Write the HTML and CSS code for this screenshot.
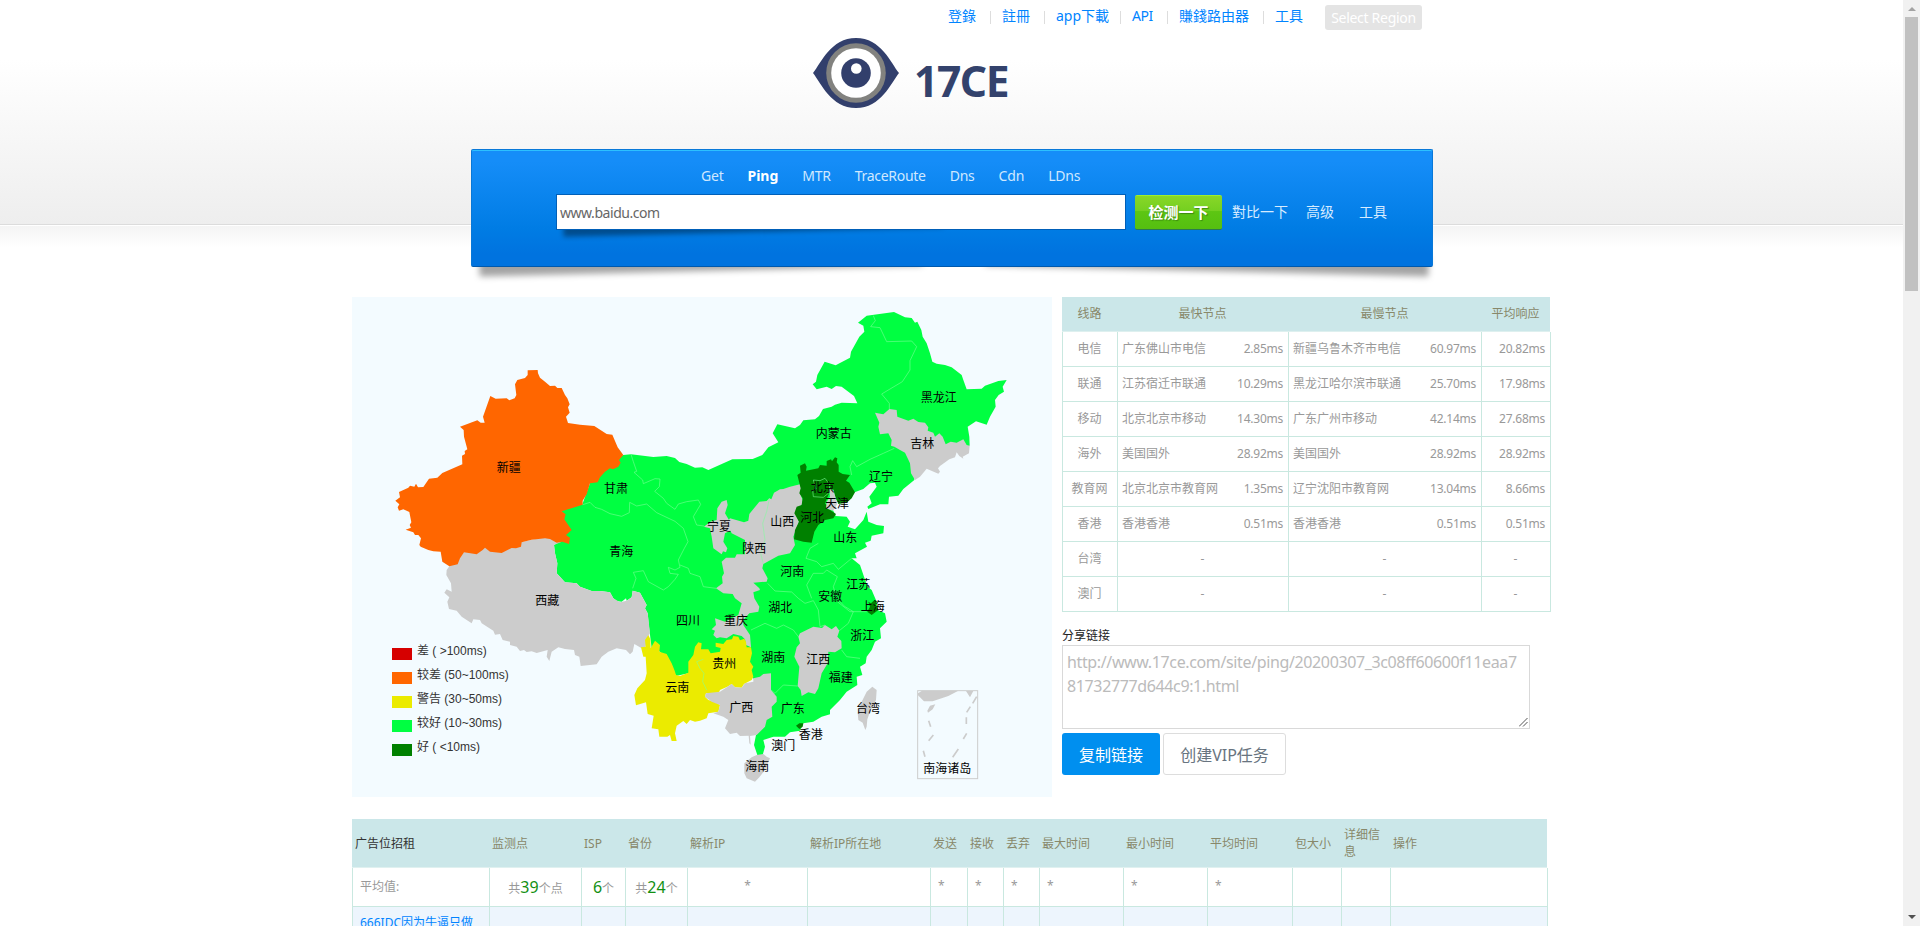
FILE: index.html
```html
<!DOCTYPE html>
<html lang="zh">
<head>
<meta charset="utf-8">
<title>17CE</title>
<link rel="stylesheet" href="styles.css">
</head>
<body>
<main class="page">
  <nav class="topnav">
    <a class="w54">登錄</a><a class="w54">註冊</a><a class="w76">app下載</a><a class="w47">API</a><a class="w96">賺錢路由器</a><a class="last">工具</a>
    <button class="region">Select Region</button>
  </nav>
  <div class="logo">
    <svg width="86" height="70" viewBox="0 0 86 70">
      <path d="M0 35C8 25 18 0 43 0S78 25 86 35C78 45 68 70 43 70S8 45 0 35Z" fill="#323f6c"/>
      <circle cx="43" cy="35" r="29.8" fill="#82827f"/><circle cx="43" cy="35" r="24.8" fill="#fff"/>
      <circle cx="43" cy="35" r="14.8" fill="#323f6c"/><circle cx="43.3" cy="30.5" r="5.3" fill="#fff"/>
    </svg>
    <span>17CE</span>
  </div>
  <section class="panel">
    <div class="panel-face">
      <div class="tabs"><a>Get</a><a class="on">Ping</a><a>MTR</a><a class="trace">TraceRoute</a><a>Dns</a><a>Cdn</a><a>LDns</a></div>
      <div class="search">
        <div class="field"><div class="url">www.baidu.com</div></div>
        <button class="go">检测一下</button>
        <a class="opt1">對比一下</a><a class="opt2">高级</a><a class="opt3">工具</a>
      </div>
    </div>
  </section>

  <div class="results">
    <div class="map">
      <svg class="china" viewBox="6 21 2100 1500">
        <path class="g" d="M820 495L843 493 910 501 950 498 975 504 988 516 1010 522 1035 533 1057 532 1075 540 1147 508 1208 507 1237 495 1255 472 1285 457 1268 430 1282 403 1335 415 1350 405 1360 391 1395 388 1407 378 1419 357 1445 350 1455 344 1475 338 1522 340 1512 318 1475 290 1458 288 1445 297 1430 290 1400 298 1388 283 1398 275 1402 255 1424 215 1457 226 1500 203 1503 185 1528 140 1543 125 1540 107 1524 98 1550 77 1632 66 1665 82 1685 84 1695 98 1702 95 1714 120 1718 140 1730 160 1740 190 1747 215 1760 221 1785 225 1805 232 1835 255 1840 270 1850 298 1895 296 1905 287 1945 273 1970 270 1958 290 1962 305 1946 315 1935 330 1937 350 1920 380 1910 404 1878 394 1853 410 1858 440 1859 467 1800 480 1693 500 1693 570 1660 597 1645 617 1617 620 1615 643 1590 643 1555 657 1552 650 1565 640 1558 620 1580 590 1575 578 1560 580 1540 597 1516 606 1440 640 1457 678 1490 680 1500 695 1493 710 1515 718 1540 690 1550 665 1555 695 1580 705 1602 708 1600 730 1565 737 1562 752 1545 758 1551 770 1515 790 1520 805 1505 805 1530 825 1542 860 1553 890 1565 900 1580 935 1583 960 1605 970 1610 995 1590 1015 1593 1045 1575 1055 1565 1080 1550 1100 1547 1120 1530 1130 1537 1155 1520 1160 1522 1185 1490 1205 1470 1230 1440 1260 1440 1273 1415 1280 1390 1295 1360 1300 1350 1322 1320 1327 1305 1340 1270 1340 1240 1350 1245 1370 1238 1395 1222 1395 1212 1365 1218 1335 1230 1300 1230 1200 1190 1130 1080 1120 1015 1150 978 1158 955 1110 930 1085 905 1075 897 1010 893 970 885 955 890 945 870 908 848 902 845 922 830 932 828 925 815 935 800 933 790 925 780 907 750 903 725 903 690 890 680 880 645 877 620 850 622 820 615 790 612 765 630 750 635 660 697 643 720 580 780 520Z"/>
        <path class="n" d="M298 829L340 780 500 760 585 740 635 755 612 765 615 790 622 820 620 850 645 877 680 880 690 890 725 903 750 903 780 907 790 925 810 937 830 932 845 922 848 902 870 908 890 945 885 955 893 970 900 1030 890 1045 887 1070 875 1075 853 1062 848 1085 840 1093 828 1080 800 1075 775 1085 755 1100 740 1123 692 1128 688 1100 675 1095 672 1080 645 1077 625 1072 605 1085 598 1113 590 1100 593 1080 560 1089 545 1084 530 1086 522 1080 510 1083 500 1070 480 1065 480 1055 458 1050 450 1032 435 1034 430 1022 395 1000 390 990 370 988 365 1000 335 980 320 962 297 957 292 935 298 922 283 908 290 898 305 905 303 880 289 855 290 840Z"/>
        <path class="o" d="M533 241L563 240 564 250 570 263 585 275 600 288 615 287 622 294 635 294 645 315 652 325 659 343 654 352 659 368 648 380 654 399 690 404 733 408 770 432 787 434 803 472 820 495 807 510 812 518 805 530 789 538 780 535 765 545 750 562 743 577 720 580 710 613 698 632 698 644 635 664 647 673 643 688 665 720 648 735 660 743 657 762 637 755 620 758 600 747 585 745 545 749 515 757 513 770 498 775 485 774 455 789 420 785 405 773 398 780 380 793 342 787 330 805 323 823 298 829 277 815 272 785 250 784 235 780 212 770 208 765 213 745 205 735 195 735 190 727 167 719 183 713 179 705 184 697 178 666 160 658 147 662 143 652 148 643 136 632 150 622 147 606 175 593 180 587 193 590 198 581 204 592 220 591 237 566 262 563 277 549 337 523 336 497 345 492 344 483 352 478 342 440 341 420 330 410 382 391 392 398 404 398 399 380 421 318 437 326 470 325 478 331 494 325 499 315 495 283 502 270 525 264 533 255Z"/>
        <path class="n" d="M1575 368L1600 373 1618 357 1640 360 1642 380 1675 392 1690 386 1705 396 1725 398 1735 412 1733 422 1750 428 1755 440 1768 430 1778 440 1787 463 1802 455 1820 458 1840 448 1850 465 1859 467 1857 490 1838 500 1840 506 1828 498 1820 487 1815 502 1798 508 1770 528 1764 535 1770 545 1765 551 1730 536 1710 560 1695 570 1683 550 1680 520 1665 488 1650 480 1633 470 1623 467 1625 450 1615 430 1590 433 1585 410 1588 398Z"/>
        <path class="n" d="M1258 625L1264 628 1272 608 1290 598 1300 597 1320 590 1350 583 1355 600 1350 610 1358 630 1355 645 1335 665 1347 695 1330 740 1335 765 1320 790 1285 797 1240 822 1237 835 1253 865 1250 875 1210 878 1228 895 1230 900 1210 907 1213 925 1228 950 1225 965 1198 970 1180 990 1180 1005 1200 1035 1203 1072 1188 1065 1185 1048 1175 1038 1150 1032 1130 1045 1110 1042 1100 1045 1090 1035 1095 1022 1085 1018 1098 1005 1095 985 1125 995 1165 975 1175 940 1155 925 1148 912 1120 910 1098 895 1118 880 1116 860 1122 850 1115 815 1128 803 1155 803 1160 793 1185 793 1185 750 1145 730 1130 700 1140 685 1182 697 1195 692 1198 672 1228 635 1250 633Z"/>
        <path class="n" d="M1115 635L1130 630 1133 645 1125 670 1140 695 1145 720 1125 730 1120 755 1132 775 1128 787 1119 784 1115 793 1090 775 1085 740 1080 715 1062 710 1080 695 1100 690 1102 655Z"/>
        <path class="d" d="M1350 527L1365 520 1370 530 1368 542 1405 535 1410 525 1430 527 1430 513 1443 508 1446 514 1455 502 1462 505 1460 517 1466 525 1466 545 1478 552 1500 555 1488 572 1498 578 1515 607 1505 625 1490 638 1465 642 1455 618 1450 598 1440 603 1425 640 1440 660 1458 672 1450 685 1425 690 1405 705 1393 725 1385 758 1360 755 1332 748 1335 720 1347 695 1333 670 1340 650 1355 645 1358 625 1348 610 1352 595 1342 555 1352 548Z"/>
        <path class="n" d="M1438 598L1450 600 1462 640 1455 655 1448 662 1428 655 1430 635 1440 620Z"/>
        <path class="y" d="M895 1035L901 1048 902 1075 915 1052 930 1065 928 1085 950 1092 965 1120 974 1142 978 1155 990 1158 1015 1148 1015 1115 1030 1095 1035 1070 1045 1057 1055 1060 1053 1078 1075 1078 1082 1090 1110 1085 1112 1074 1097 1070 1097 1058 1120 1062 1130 1050 1146 1048 1150 1038 1165 1040 1170 1051 1183 1046 1188 1055 1190 1072 1203 1072 1206 1090 1200 1115 1210 1130 1205 1140 1210 1160 1205 1170 1182 1182 1175 1193 1155 1192 1145 1182 1132 1190 1110 1200 1105 1212 1068 1210 1065 1220 1075 1230 1095 1235 1110 1245 1105 1265 1075 1270 1070 1285 1050 1292 1035 1295 1020 1290 1010 1302 1000 1293 980 1307 975 1330 980 1353 965 1353 960 1335 952 1340 928 1340 925 1318 905 1315 911 1277 893 1272 888 1237 858 1246 853 1215 862 1195 885 1170 890 1150 887 1100 880 1100 873 1072 887 1070 885 1050Z"/>
        <path class="n" d="M1210 1165L1230 1160 1240 1152 1263 1150 1263 1200 1280 1220 1280 1235 1265 1250 1267 1280 1250 1290 1245 1310 1220 1335 1200 1338 1202 1364 1198 1360 1196 1337 1170 1338 1160 1328 1140 1332 1125 1315 1135 1290 1120 1280 1090 1270 1105 1265 1110 1245 1085 1235 1065 1220 1068 1210 1110 1205 1145 1182 1155 1192 1175 1193 1185 1180 1210 1175Z"/>
        <path class="n" d="M1345 1040L1350 1030 1376 1017 1390 1010 1416 1014 1425 1005 1445 1018 1458 1008 1468 1022 1462 1040 1474 1053 1475 1075 1455 1087 1435 1085 1433 1120 1415 1150 1405 1195 1395 1212 1375 1207 1355 1218 1352 1200 1343 1188 1348 1130 1333 1100 1340 1072 1350 1060Z"/>
        <path class="n" d="M1205 1402L1220 1395 1240 1392 1250 1400 1260 1405 1245 1440 1228 1462 1215 1475 1190 1465 1183 1450 1183 1420ZM1567 1190L1580 1200 1578 1230 1560 1265 1552 1288 1550 1310 1546 1320 1538 1298 1525 1290 1523 1268 1535 1235 1550 1205Z"/>
        <path class="d" d="M1555 935L1563 940 1570 933 1580 934 1577 945 1585 960 1565 975 1552 965 1560 950ZM1338 1307L1348 1300 1360 1300 1358 1310 1348 1317Z"/>
        <path class="line" d="M843 493L850 515 860 544 852 547 878 570 880 581 915 566 930 567 928 590 914 604 940 625 950 640 975 658 985 642 1010 635 1045 630 1052 643 1030 680 1040 705 1062 708M698 644L720 637 735 652 755 658 780 671 815 679 838 668 839 637 860 648 890 642 920 668 975 694 1000 715 1014 755 1003 775 985 810 990 832 975 840 955 832 960 850 985 853 975 868 955 890 940 900 895 875 880 842 850 847 858 865 848 895M990 825L1015 835 1020 850 1050 860 1060 890 1098 895M1570 77L1576 92 1562 110 1590 113 1610 155 1685 153 1700 170 1680 212 1680 240 1657 275 1595 312 1618 340 1618 357M1633 475L1600 490 1560 508 1520 530 1508 512 1500 530 1505 555M1390 570L1410 572 1425 565 1440 585 1435 610 1420 622 1390 620 1388 600 1398 597 1390 570M1258 625L1250 665 1238 700 1245 750 1232 790 1240 822M1405 760L1380 775 1368 805 1400 815 1415 830 1450 820 1465 838 1505 805M1253 880L1275 903 1325 906 1345 925 1365 940 1390 932 1405 960 1410 1010 1425 1005M1385 925L1370 885 1390 850 1420 850 1430 840 1462 860 1450 890 1460 925 1485 950 1510 965 1495 1000 1468 1022M1462 935L1500 965 1550 965M1203 1020L1245 1000 1280 1015 1300 1005 1330 1020 1345 1040M1263 1200L1275 1210 1300 1185 1343 1188M1475 1080L1490 1100 1530 1105M1060 1108L1040 1115 1050 1135 1062 1150 1058 1175 1070 1200"/>
        <rect x="1703" y="1202" width="180" height="264" fill="none" stroke="#ccc" stroke-width="3"/>
        <path class="n" d="M1704 1210L1716 1202H1825L1795 1218 1748 1234 1722 1234 1704 1216ZM1848 1203H1870L1860 1222ZM1740 1247L1756 1243 1748 1258 1734 1268 1732 1262Z"/>
        <path d="M1880 1220L1868 1240M1861 1250L1850 1267M1849 1282V1302M1850 1330L1840 1347M1825 1377L1808 1402M1736 1292L1742 1310M1750 1335L1736 1352M1720 1382L1725 1400" fill="none" stroke="#ccc" stroke-width="5"/>
        <g class="lab">
          <text x="440" y="546">新疆</text><text x="762" y="610">甘肃</text><text x="778" y="797">青海</text><text x="556" y="945">西藏</text><text x="978" y="1005">四川</text><text x="946" y="1206">云南</text>
          <text x="1087" y="1135">贵州</text><text x="1712" y="336">黑龙江</text><text x="1397" y="444">内蒙古</text><text x="1681" y="474">吉林</text><text x="1557" y="573">辽宁</text><text x="1382" y="607">北京</text><text x="1425" y="653">天津</text><text x="1351" y="697">河北</text><text x="1261" y="708">山西</text><text x="1071" y="723">宁夏</text><text x="1177" y="788">陕西</text><text x="1450" y="757">山东</text><text x="1291" y="858">河南</text><text x="1489" y="897">江苏</text><text x="1405" y="932">安徽</text><text x="1255" y="966">湖北</text><text x="1532" y="964">上海</text><text x="1122" y="1005">重庆</text><text x="1501" y="1050">浙江</text><text x="1234" y="1116">湖南</text><text x="1369" y="1122">江西</text><text x="1436" y="1176">福建</text><text x="1138" y="1265">广西</text><text x="1292" y="1270">广东</text><text x="1518" y="1270">台湾</text><text x="1346" y="1347">香港</text><text x="1264" y="1380">澳门</text><text x="1186" y="1443">海南</text><text x="1720" y="1448">南海诸岛</text>
        </g>
      </svg>
      <ul class="legend">
        <li><i class="bad"></i>差 ( &gt;100ms)</li><li><i class="poor"></i>较差 (50~100ms)</li><li><i class="warn"></i>警告 (30~50ms)</li><li><i class="fair"></i>较好 (10~30ms)</li><li><i class="good"></i>好 ( &lt;10ms)</li>
      </ul>
    </div>
    <aside class="side">
      <div class="lines head"><b>线路</b><b>最快节点</b><b>最慢节点</b><b>平均响应</b></div>
      <div class="lines"><span>电信</span><span>广东佛山市电信<em>2.85ms</em></span><span>新疆乌鲁木齐市电信<em>60.97ms</em></span><span><em>20.82ms</em></span></div>
      <div class="lines"><span>联通</span><span>江苏宿迁市联通<em>10.29ms</em></span><span>黑龙江哈尔滨市联通<em>25.70ms</em></span><span><em>17.98ms</em></span></div>
      <div class="lines"><span>移动</span><span>北京北京市移动<em>14.30ms</em></span><span>广东广州市移动<em>42.14ms</em></span><span><em>27.68ms</em></span></div>
      <div class="lines"><span>海外</span><span>美国国外<em>28.92ms</em></span><span>美国国外<em>28.92ms</em></span><span><em>28.92ms</em></span></div>
      <div class="lines"><span>教育网</span><span>北京北京市教育网<em>1.35ms</em></span><span>辽宁沈阳市教育网<em>13.04ms</em></span><span><em>8.66ms</em></span></div>
      <div class="lines"><span>香港</span><span>香港香港<em>0.51ms</em></span><span>香港香港<em>0.51ms</em></span><span><em>0.51ms</em></span></div>
      <div class="lines none"><span>台湾</span><span>-</span><span>-</span><span>-</span></div>
      <div class="lines none"><span>澳门</span><span>-</span><span>-</span><span>-</span></div>
      <div class="share-label">分享链接</div>
      <div class="share">http://www.17ce.com/site/ping/20200307_3c08ff60600f11eaa7<br>81732777d644c9:1.html
        <svg class="grip" width="9" height="9" viewBox="0 0 9 9"><path d="M0 8.5L8.5 0M4 8.5L8.5 4" stroke="#555" fill="none"/></svg>
      </div>
      <div class="actions"><button class="copy">复制链接</button><button class="vip">创建VIP任务</button></div>
    </aside>
  </div>

  <div class="detail">
    <div class="row thead"><span class="dark">广告位招租</span><span>监测点</span><span>ISP</span><span>省份</span><span>解析IP</span><span>解析IP所在地</span><span>发送</span><span>接收</span><span>丢弃</span><span>最大时间</span><span>最小时间</span><span>平均时间</span><span>包大小</span><span>详细信息</span><span>操作</span></div>
    <div class="row avg"><span>平均值:</span><span class="c">共<b>39</b>个点</span><span class="c"><b>6</b>个</span><span class="c">共<b>24</b>个</span><span class="c star">*</span><span></span><span class="star">*</span><span class="star">*</span><span class="star">*</span><span class="star">*</span><span class="star">*</span><span class="star">*</span><span></span><span></span><span></span></div>
    <div class="row site"><span><a>666IDC因为牛逼只做</a></span><span></span><span></span><span></span><span></span><span></span><span></span><span></span><span></span><span></span><span></span><span></span><span></span><span></span><span></span></div>
  </div>
</main>
<div class="scrollbar"><i class="up"></i><div class="thumb"></div><i class="down"></i></div>
</body>
</html>
```
FILE: styles.css
```css
* { box-sizing: border-box; }
html { height: 926px; overflow: hidden; }
body { margin: 0; height: 926px; overflow: hidden; display: flex; background: #fff; font-family: "Noto Sans", "Noto Sans CJK SC", sans-serif; font-size: 12px; color: #999; }
button { font-family: inherit; margin: 0; padding: 0; border: 0; white-space: nowrap; }
.page { width: 1903px; height: 926px; overflow: hidden; isolation: isolate; background: linear-gradient(#fff 0, #fff 60px, #eee 224px, #dcdcdc 224px, #dcdcdc 225px, #fff 225px, #fff 226px, #f4f4f4 226px, #fff 247px); }
.topnav { height: 30px; padding: 5px 0 0 948px; display: flex; font-size: 14px; line-height: 22px; color: #0084ff; font-family: "Noto Sans", "Noto Sans CJK TC", sans-serif; white-space: nowrap; }
.topnav a { background: linear-gradient(#ddd, #ddd) no-repeat right 11px top 6px / 1px 13px; }
.topnav .last { width: 50px; background: none; }
.w54 { width: 54px; } .w76 { width: 76px; } .w96 { width: 96px; }
.topnav .w47 { width: 47px; letter-spacing: -.5px; }
.region { width: 97px; height: 25px; background: #e4e4e4; border-radius: 3px; color: #fff; font-size: 14px; letter-spacing: -.3px; }
.logo { height: 70px; margin: 8px 0 0 813px; display: flex; }
.logo span { margin: 12px 0 0 15px; font: bold 42.5px/62px "Noto Sans", sans-serif; letter-spacing: -1.4px; color: #33426c; }
.panel { position: relative; width: 962px; height: 118px; margin: 41px 0 0 471px; }
.panel::before, .panel::after { content: ""; position: absolute; z-index: -1; bottom: 9px; width: 46%; height: 20px; box-shadow: 0 13px 6px rgba(0,0,0,.36); }
.panel::before { left: 8px; transform: rotate(-1.4deg); }
.panel::after { right: 4px; transform: rotate(1.4deg); }
.panel-face { height: 118px; border: 1px solid #0878d8; border-bottom-color: #0059ad; border-radius: 2px; box-shadow: inset 0 1px #2cc0ff; background: linear-gradient(#158df8 10%, #007ce4 68%, #0073df 90%); padding-top: 16px; }
.tabs { display: flex; gap: 24px; padding-left: 229px; height: 28px; line-height: 20px; color: #cfe8ff; font-size: 14px; letter-spacing: -.2px; }
.tabs .on { color: #fff; font-weight: bold; letter-spacing: -.05px; }
.tabs .trace { letter-spacing: -.3px; }
.search { display: flex; padding-left: 84px; white-space: nowrap; color: #d6ebff; font-size: 14px; line-height: 35px; }
.field { position: relative; isolation: isolate; width: 570px; height: 36px; }
.field::before { content: ""; position: absolute; z-index: -1; left: 7px; bottom: 9px; width: 380px; height: 18px; transform: rotate(-1.4deg); box-shadow: 0 11px 5px rgba(0,0,0,.38); }
.url { height: 36px; background: #fff; border: 1px solid #005fb8; padding-left: 3px; line-height: 35px; color: #666; letter-spacing: -.45px; }
.go { width: 87px; height: 35px; margin: 1px 10px 0 9px; padding-bottom: 2px; border-radius: 2px; border-top: 1px solid #9cef2e; border-bottom: 1px solid #2a7a50; background: linear-gradient(#88d728, #74cf20 46%, #5dc613 47%, #55bf10); color: #fff; font-size: 15px; font-weight: bold; text-shadow: 1px 1px 1px #3d8a10; }
.opt1 { width: 74px; font-family: "Noto Sans CJK TC", sans-serif; } .opt2 { width: 53px; }

.results { display: flex; gap: 10px; margin: 30px 0 0 352px; height: 500px; }
.map { position: relative; width: 700px; height: 500px; background: #f3fbff; }
.china { display: block; width: 700px; height: 500px; }
.g { fill: #00ff41; } .n { fill: #ccc; } .o { fill: #ff6600; } .y { fill: #ebeb00; } .d { fill: #008000; }
.line { fill: none; stroke: #80ff9c; stroke-width: 1.7; }
.lab { font-size: 36px; fill: #000; font-family: "Noto Sans CJK SC", sans-serif; }
.legend { position: absolute; left: 40px; top: 342px; margin: 0; padding: 0; list-style: none; font-family: "Liberation Sans", "Noto Sans CJK SC", sans-serif; font-size: 12px; color: #333; }
.legend li { display: flex; height: 24px; line-height: 24px; align-items: flex-start; white-space: pre; }
.legend i { width: 20px; height: 12px; margin: 9px 5px 0 0; }
.bad { background: #d60000; } .poor { background: #ff6600; } .warn { background: #ebeb00; } .fair { background: #00ff41; } .good { background: #008000; }

.side { width: 489px; }
.lines { display: grid; grid-template-columns: 55px 171px 193px 70px; height: 35px; line-height: 34px; border-bottom: 1px solid #c9e8e0; white-space: nowrap; }
.lines span { border-left: 1px solid #c9e8e0; padding: 0 5px 0 4px; display: flex; justify-content: space-between; }
.lines span:first-child { justify-content: center; }
.lines span:last-child { border-right: 1px solid #c9e8e0; justify-content: flex-end; }
.lines em { font-style: normal; letter-spacing: -.25px; }
.lines.none span { justify-content: center; }
.lines.head { width: 488px; grid-template-columns: 55px 171px 193px 69px; background: #cbe7e9; color: #88886a; text-align: center; border-bottom-color: #def0ef; }
.lines.head b { font-weight: normal; }
.share-label { margin-top: 15px; height: 18px; line-height: 18px; color: #222; }
.share { position: relative; width: 468px; height: 84px; border: 1px solid #d9d9d9; padding: 4px 0 0 4px; font-size: 16px; line-height: 24px; color: #bbb; letter-spacing: -.37px; white-space: nowrap; }
.grip { position: absolute; right: 1px; bottom: 1px; }
.actions { display: flex; gap: 3px; margin-top: 4px; }
.actions button { height: 42px; padding-bottom: 1px; font-size: 16px; border-radius: 3px; }
.actions .copy { width: 98px; background: #008fef; color: #fff; }
.actions .vip { width: 123px; background: #fff; border: 1px solid #ddd; color: #687480; }

.detail { width: 1196px; margin: 22px 0 0 352px; }
.row { display: grid; grid-template-columns: 137px 92px 44px 62px 120px 123px 37px 36px 36px 84px 84px 85px 49px 49px 158px; }
.row span { border-left: 1px solid #c9e8e0; border-bottom: 1px solid #c9e8e0; padding: 0 7px; white-space: nowrap; }
.row span:last-child { border-right: 1px solid #c9e8e0; }
.thead { width: 1195px; height: 49px; background: #cbe7e9; border-bottom: 1px solid #e0f1f0; color: #88886a; align-items: center; line-height: 17px; }
.row.thead span { border: 0; padding: 0 3px; white-space: normal; }
.row.thead .dark { color: #333; }
.avg span { height: 39px; line-height: 38px; }
.avg .c { text-align: center; padding: 0; }
.avg b { font-size: 16px; font-weight: normal; color: #139013; }
.row .star { line-height: 35px; }
.site { background: #edf5fd; height: 60px; line-height: 31px; color: #0084ff; }

.scrollbar { width: 17px; height: 926px; background: #f1f1f1; display: flex; flex-direction: column; align-items: center; }
.thumb { width: 13px; height: 274px; margin-top: 6px; margin-bottom: auto; background: #c1c1c1; }
.up { margin-top: 7px; border: 4px solid transparent; border-top: 0; border-bottom-color: #a3a3a3; }
.down { margin-bottom: 7px; border: 4px solid transparent; border-bottom: 0; border-top-color: #505050; }
```
